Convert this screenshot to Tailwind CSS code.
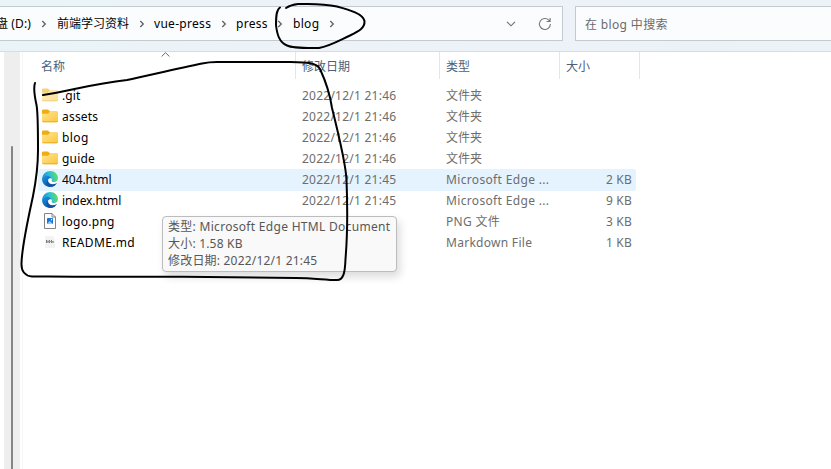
<!DOCTYPE html>
<html lang="zh-CN">
<head>
<meta charset="utf-8">
<title>blog</title>
<script src="https://cdn.jsdelivr.net/npm/@tailwindcss/browser@4"></script>
</head>
<body class="relative flex h-[469px] w-[831px] flex-col overflow-hidden bg-white font-['Noto_Sans','Noto_Sans_CJK_SC',sans-serif] text-[12px] leading-[17px] whitespace-nowrap text-[#6d6d6d]">
<svg class="absolute h-0 w-0">
  <defs>
    <linearGradient id="fold" x1="0" y1="0" x2="1" y2="1"><stop offset="0" stop-color="#ffe591"/><stop offset="1" stop-color="#fcc63a"/></linearGradient>
    <linearGradient id="eg" x1="0" y1="0.5" x2="1" y2="0.3"><stop offset="0" stop-color="#1b8fe0"/><stop offset=".5" stop-color="#2cc1d4"/><stop offset="1" stop-color="#6be04e"/></linearGradient>
    <linearGradient id="eb" x1="0" y1="0" x2="0.6" y2="1"><stop offset="0" stop-color="#1896e0"/><stop offset="1" stop-color="#0c50a4"/></linearGradient>
    <symbol id="folder" viewBox="0 0 16 16"><path d="M0 2.700Q0 1.500 1.200 1.500H6L8 3.500H14.800Q16 3.500 16 4.500V8H0Z" fill="#f0ac12"/><path d="M0 5.700H6L8 3.700H15Q16 3.700 16 4.700V13Q16 14.200 14.800 14.200H1.200Q0 14.200 0 13Z" fill="url(#fold)"/><path d="M.2 13.300Q.4 14.200 1.400 14.200H14.600Q15.600 14.200 15.800 13.300Z" fill="#e9ae28"/></symbol>
    <symbol id="edge" viewBox="0 0 16 16"><path d="M.1 7.5C.6 3 4 0 8.1 0C13 0 16 3.6 16 7.1C16 9.6 14 11.1 12 11.1C10.300 11.1 9.200 10.600 9.400 9.900C10.500 8.500 9.500 5.200 5.800 5C3 4.900 1 6 .1 7.500Z" fill="url(#eg)"/><path d="M.1 7.500C1 5.500 3 4.500 5.200 4.700C8.200 4.900 9.800 6.500 9.600 8.500C8.500 6.800 6 7.500 5.800 9.700C5.600 12.400 8.600 14.800 13.800 13.500C11.500 16 8.500 16.200 6.300 15.700C2.400 14.800-.300 11.500.1 7.500Z" fill="url(#eb)"/><path d="M6.300 8.800C5.500 12.500 10 14.600 14.200 12.200Q15 11.900 14.500 12.700C12.800 15.100 10 16.100 7.500 15.500C4 14 4.200 10.200 6.300 8.800Z" fill="#1453a3"/><path d="M9.600 8C9.200 7 7.600 6.900 6.800 8.200C5.800 10 7.400 12.700 11.200 12.600Q13.400 12.500 14.400 11.700Q15.100 11.200 15.300 10.400C13.600 11.300 9.500 11.600 9.300 10.100Q9.800 9 9.600 8Z" fill="#fff"/></symbol>
    <symbol id="sep" viewBox="0 0 6 8"><path d="M1.300 1L4.300 4L1.300 7" fill="none" stroke="#5d6165" stroke-width="1.300"/></symbol>
  </defs>
</svg>

<header class="flex h-[52px] shrink-0 gap-3 border-b border-[#d5dce2] bg-linear-to-r from-[#eaf4f7] via-[#edf2f9] to-[#ebf3f6] pt-[6px]">
  <div class="flex h-[35px] w-[563px] items-center border border-l-0 border-[#c3cbd1] bg-[#fbfcfe] text-black">
    <span class="-ml-[4px] w-[45px] tracking-[.1px]">盘 (D:)</span>
    <svg class="h-2 w-[6px]"><use href="#sep"/></svg>
    <span class="ml-[10px] w-[82px]">前端学习资料</span>
    <svg class="h-2 w-[6px]"><use href="#sep"/></svg>
    <span class="ml-[9px] w-[67px] tracking-[.3px]">vue-press</span>
    <svg class="h-2 w-[6px]"><use href="#sep"/></svg>
    <span class="ml-[9px] w-[41px] tracking-[.3px]">press</span>
    <svg class="h-2 w-[6px]"><use href="#sep"/></svg>
    <span class="ml-[10px] w-[36px] tracking-[.3px]">blog</span>
    <svg class="h-2 w-[6px]"><use href="#sep"/></svg>
    <svg class="ml-auto h-[6px] w-[10px]" viewBox="0 0 10 6"><path d="M1 .8L5 4.800L9 .8" fill="none" stroke="#6b6f73" stroke-width="1.100"/></svg>
    <svg class="mr-[10px] ml-[22px] h-[14px] w-[14px]" viewBox="0 0 14 14"><path d="M12.400 7A5.500 5.500 0 1 1 10.800 3.100L12 4.300M12.100 1V4.500H8.600" fill="none" stroke="#74787c" stroke-width="1.100"/></svg>
  </div>
  <div class="flex h-[35px] flex-1 items-center border border-r-0 border-[#c3cbd1] bg-[#fbfcfe] pt-px pl-[9px] tracking-[.35px] text-[#6b6b6b]">在 blog 中搜索</div>
</header>

<main class="flex flex-1">
  <aside class="ml-1 w-4 bg-[#eee] pt-[94px] pl-[7px]"><div class="h-full w-[2px] rounded-t-sm bg-[#858585]"></div></aside>
  <section class="ml-[2px] flex-1 border-l border-[#f5f5f5]">
    <div class="relative flex h-[27px] items-center text-[#4c607a]">
      <div class="flex h-full w-[273px] items-center border-r border-[#e5e5e5] pt-px pl-[18px]">名称</div>
      <div class="flex h-full w-[144px] items-center border-r border-[#e5e5e5] pt-px pl-[6px]">修改日期</div>
      <div class="flex h-full w-[120px] items-center border-r border-[#e5e5e5] pt-px pl-[6px]">类型</div>
      <div class="flex h-full w-[80px] items-center border-r border-[#e5e5e5] pt-px pl-[6px]">大小</div>
      <svg class="absolute top-0 left-[138px] h-[5px] w-[9px]" viewBox="0 0 9 5"><path d="M.6 4.500L4.500 .7L8.400 4.500" fill="none" stroke="#666"/></svg>
    </div>
    <div class="mt-[6px] ml-[15px] w-[598px]">
      <div class="flex h-[21px] items-center pl-1"><svg class="mb-[2px] h-4 w-4 opacity-55"><use href="#folder"/></svg><span class="ml-1 w-[240px] tracking-[.1px] text-black">.git</span><span class="w-[144px] tracking-[.24px]">2022/12/1 21:46</span><span>文件夹</span></div>
      <div class="flex h-[21px] items-center pl-1"><svg class="mb-[2px] h-4 w-4"><use href="#folder"/></svg><span class="ml-1 w-[240px] tracking-[.2px] text-black">assets</span><span class="w-[144px] tracking-[.24px]">2022/12/1 21:46</span><span>文件夹</span></div>
      <div class="flex h-[21px] items-center pl-1"><svg class="mb-[2px] h-4 w-4"><use href="#folder"/></svg><span class="ml-1 w-[240px] tracking-[.4px] text-black">blog</span><span class="w-[144px] tracking-[.24px]">2022/12/1 21:46</span><span>文件夹</span></div>
      <div class="flex h-[21px] items-center pl-1"><svg class="mb-[2px] h-4 w-4"><use href="#folder"/></svg><span class="ml-1 w-[240px] tracking-[.2px] text-black">guide</span><span class="w-[144px] tracking-[.24px]">2022/12/1 21:46</span><span>文件夹</span></div>
      <div class="flex h-[22px] items-center rounded-[2px] bg-[#e5f3ff] pb-px pl-1"><svg class="mb-[2px] h-4 w-4"><use href="#edge"/></svg><span class="ml-1 w-[240px] tracking-[-.05px] text-black">404.html</span><span class="w-[144px] tracking-[.24px]">2022/12/1 21:45</span><span class="tracking-[.34px]">Microsoft Edge ...</span><span class="mr-1 ml-auto tracking-[.2px]">2 KB</span></div>
      <div class="-mt-px flex h-[21px] items-center pl-1"><svg class="mb-[2px] h-4 w-4"><use href="#edge"/></svg><span class="ml-1 w-[240px] tracking-[-.08px] text-black">index.html</span><span class="w-[144px] tracking-[.24px]">2022/12/1 21:45</span><span class="tracking-[.34px]">Microsoft Edge ...</span><span class="mr-1 ml-auto tracking-[.2px]">9 KB</span></div>
      <div class="flex h-[21px] items-center pl-1"><svg class="mb-[2px] h-4 w-4" viewBox="0 0 16 16"><path d="M2.500 .5H10L13.500 4V15.500H2.500Z" fill="#fdfdfd" stroke="#858585"/><path d="M10 .5V4H13.500" fill="none" stroke="#858585"/><rect x="5" y="5" width="6" height="6" rx=".8" fill="#1976d2"/><path d="M5 10.700L7.800 8L10.800 11Z" fill="#9bd5fb"/><circle cx="9.500" cy="6.700" r=".7" fill="#fff"/></svg><span class="ml-1 w-[384px] tracking-[.3px] text-black">logo.png</span><span class="tracking-[.3px]">PNG 文件</span><span class="mr-1 ml-auto tracking-[.2px]">3 KB</span></div>
      <div class="flex h-[21px] items-center pl-1"><svg class="mb-[2px] h-4 w-4" viewBox="0 0 16 16"><path d="M3 2H10.500L13 4.500V14H3Z" fill="#f3f3f3"/><path d="M4.500 6V9M6 6.500V9M7.500 6V9M9.500 6V9M11 7V9" stroke="#777"/><path d="M4.500 7.500H11.500" stroke="#999"/></svg><span class="ml-1 w-[384px] tracking-[.35px] text-black">README.md</span><span class="tracking-[.28px]">Markdown File</span><span class="mr-1 ml-auto tracking-[.2px]">1 KB</span></div>
    </div>
  </section>
</main>

<div class="absolute top-[216px] left-[162px] h-[56px] w-[235px] rounded-[4px] border border-[#bcbcbc] bg-[#f9f9f9] pt-px pl-[5px] text-[#575757] shadow-[3px_5px_8px_rgba(0,0,0,0.14)]">
  <p class="tracking-[.3px]">类型: Microsoft Edge HTML Document</p>
  <p class="tracking-[.2px]">大小: 1.58 KB</p>
  <p class="tracking-[.2px]">修改日期: 2022/12/1 21:45</p>
</div>

<svg class="absolute inset-0" width="831" height="469" viewBox="0 0 831 469" fill="none" stroke="#000" stroke-width="2" stroke-linecap="round" stroke-linejoin="round">
  <path d="M280 7.500C276 10 276 18 276 25C277 34 279 42 287 45.500C293 48.500 306 48 319 48C330 46 340 40 350 35.500C359 31 365 28 364.500 21C363 14 350 10 337 6.500C321 3 309 4 298 4C293 4.500 289 6 286 8"/>
  <path d="M43 95C70 91 91 84 127 80C150 75 180 68 202 63.500Q209 62 217 62H285C306 62.500 316 62 320 69C326 82 330 94 332 108C340 140 346 165 346.500 180C347.500 205 347.500 235 345.500 259C345 274 343 280 337 280C325 280 314 278 296 278C225 277 160 276.500 90 276.700C65 277 46 276.500 32 276.500C26 276 21 272 21.500 263C22 245 30 210 33 196C37 176 38 166 38 150C38 125 38 112 36.500 105C35 98 33 88 35 83"/>
</svg>
</body>
</html>
